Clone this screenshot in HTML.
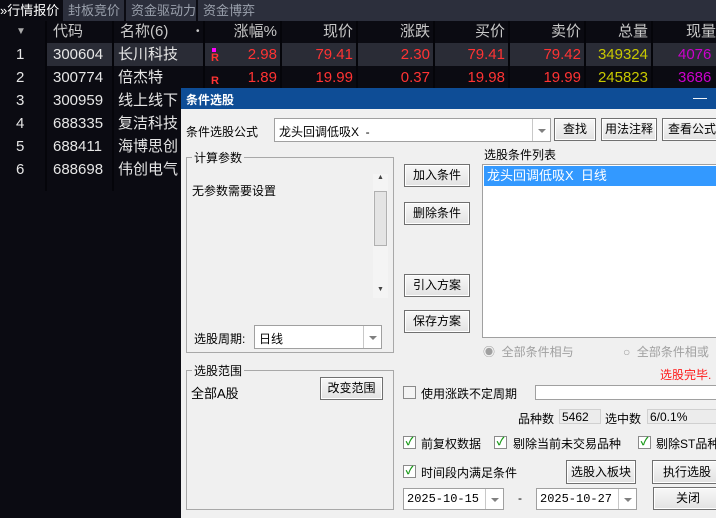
<!DOCTYPE html>
<html><head><meta charset="utf-8"><style>
*{margin:0;padding:0;box-sizing:border-box}
body{width:716px;height:517px;overflow:hidden;background:#0b0b12;font-family:"Liberation Sans","Noto Sans CJK SC",sans-serif;position:relative}
.a{position:absolute;white-space:nowrap}
.tab{position:absolute;top:0;height:21px;background:#2c2f3c;color:#9aa0ac;font-size:13px;line-height:21px;padding-left:5px}
.hd{color:#c8c8c8;font-size:15px}
.r{text-align:right}
.c{font-size:15px;line-height:23px}
.w{color:#e6e6e6}.red{color:#ff3333}.yel{color:#c8c800}.mag{color:#cc00cc}
.sep{position:absolute;top:21px;width:2px;height:170px;background:#05050a}
.dlg{position:absolute;left:181px;top:88px;width:540px;height:430px;background:#f0f0f0;font-size:12px;color:#000}
.d{position:absolute;white-space:nowrap;font-size:12px}
.btn{position:absolute;background:linear-gradient(#f8f8f8,#e2e2e2);border:1px solid #707070;box-shadow:inset 0 0 0 1px #fff;text-align:center;font-size:12px;line-height:20px}
.box{position:absolute;background:#fff;border:1px solid #a0a0a0}
.grp{position:absolute;border:1px solid #a8a8a8}
.gl{position:absolute;top:-9px;left:5px;background:#f0f0f0;padding:0 2px;font-size:12px}
.cb{position:absolute;width:13px;height:13px;border:1px solid #8a8a8a;background:#fff;color:#1a9a1a;font-size:11px;line-height:11px;text-align:center;font-weight:bold}
.dd{position:absolute;right:0;top:0;bottom:0;width:18px;border-left:1px solid #c8c8c8}
.dd:after{content:"";position:absolute;left:5px;top:45%;border:4px solid transparent;border-top:4px solid #808080}
</style></head><body>
<div class="tab" style="left:0;width:62px;background:#0b0b12;color:#fff;padding-left:0">»行情报价</div>
<div class="tab" style="left:63px;width:61px">封板竞价</div>
<div class="tab" style="left:126px;width:70px">资金驱动力</div>
<div class="tab" style="left:198px;width:64px">资金博弈</div>
<div class="a" style="left:262px;top:0;width:454px;height:21px;background:#2c2f3c"></div>

<div class="a" style="left:46px;top:43px;width:670px;height:23px;background:#2a2c36"></div>
<div class="sep" style="left:45px"></div><div class="sep" style="left:112px"></div><div class="sep" style="left:203px"></div><div class="sep" style="left:280px"></div><div class="sep" style="left:356px"></div><div class="sep" style="left:433px"></div><div class="sep" style="left:508px"></div><div class="sep" style="left:584px"></div><div class="sep" style="left:651px"></div>

<div class="a hd" style="left:16px;top:21px;line-height:22px;font-size:10px;color:#aaa">▼</div>
<div class="a hd" style="left:53px;top:21px;line-height:22px">代码</div>
<div class="a hd" style="left:120px;top:21px;line-height:22px">名称(6)</div>
<div class="a hd" style="left:196px;top:21px;line-height:22px;font-size:10px">•</div>
<div class="a hd r" style="left:205px;width:72px;top:21px;line-height:22px">涨幅%</div>
<div class="a hd r" style="left:282px;width:71px;top:21px;line-height:22px">现价</div>
<div class="a hd r" style="left:358px;width:72px;top:21px;line-height:22px">涨跌</div>
<div class="a hd r" style="left:435px;width:70px;top:21px;line-height:22px">买价</div>
<div class="a hd r" style="left:510px;width:71px;top:21px;line-height:22px">卖价</div>
<div class="a hd r" style="left:586px;width:62px;top:21px;line-height:22px">总量</div>
<div class="a hd r" style="left:653px;width:63px;top:21px;line-height:22px;overflow:hidden">现量</div>

<div class="a c w" style="left:16px;top:43px">1</div><div class="a c w" style="left:53px;top:43px">300604</div><div class="a c w" style="left:118px;top:43px">长川科技</div>
<div class="a c w" style="left:16px;top:66px">2</div><div class="a c w" style="left:53px;top:66px">300774</div><div class="a c w" style="left:118px;top:66px">倍杰特</div>
<div class="a c w" style="left:16px;top:89px">3</div><div class="a c w" style="left:53px;top:89px">300959</div><div class="a c w" style="left:118px;top:89px">线上线下</div>
<div class="a c w" style="left:16px;top:112px">4</div><div class="a c w" style="left:53px;top:112px">688335</div><div class="a c w" style="left:118px;top:112px">复洁科技</div>
<div class="a c w" style="left:16px;top:135px">5</div><div class="a c w" style="left:53px;top:135px">688411</div><div class="a c w" style="left:118px;top:135px">海博思创</div>
<div class="a c w" style="left:16px;top:158px">6</div><div class="a c w" style="left:53px;top:158px">688698</div><div class="a c w" style="left:118px;top:158px">伟创电气</div>

<div class="a" style="left:212px;top:48px;width:4px;height:4px;background:#f0f"></div>
<div class="a red" style="left:211px;top:52px;font-size:11px;font-weight:bold">R</div>
<div class="a red" style="left:211px;top:75px;font-size:11px;font-weight:bold">R</div>
<div class="a c red r" style="left:205px;width:72px;top:43px">2.98</div>
<div class="a c red r" style="left:282px;width:71px;top:43px">79.41</div>
<div class="a c red r" style="left:358px;width:72px;top:43px">2.30</div>
<div class="a c red r" style="left:435px;width:70px;top:43px">79.41</div>
<div class="a c red r" style="left:510px;width:71px;top:43px">79.42</div>
<div class="a c yel r" style="left:586px;width:62px;top:43px">349324</div>
<div class="a c mag" style="left:678px;top:43px">4076</div>
<div class="a c red r" style="left:205px;width:72px;top:66px">1.89</div>
<div class="a c red r" style="left:282px;width:71px;top:66px">19.99</div>
<div class="a c red r" style="left:358px;width:72px;top:66px">0.37</div>
<div class="a c red r" style="left:435px;width:70px;top:66px">19.98</div>
<div class="a c red r" style="left:510px;width:71px;top:66px">19.99</div>
<div class="a c yel r" style="left:586px;width:62px;top:66px">245823</div>
<div class="a c mag" style="left:678px;top:66px">3686</div>

<div class="dlg">
<div class="a" style="left:0;top:0;width:540px;height:21px;background:#0e4d96"></div>
<div class="d" style="left:5px;top:3px;color:#fff;font-weight:bold">条件选股</div>
<div class="d" style="left:512px;top:1px;color:#fff;font-size:14px">—</div>
<div class="d" style="left:5px;top:35px">条件选股公式</div>
<div class="box" style="left:93px;top:30px;width:277px;height:24px"><span class="d" style="left:4px;top:4px">龙头回调低吸X &nbsp;-</span><div class="dd"></div></div>
<div class="btn" style="left:373px;top:30px;width:42px;height:23px">查找</div>
<div class="btn" style="left:420px;top:30px;width:56px;height:23px">用法注释</div>
<div class="btn" style="left:481px;top:30px;width:60px;height:23px">查看公式</div>

<div class="grp" style="left:5px;top:69px;width:208px;height:196px"><span class="gl">计算参数</span></div>
<div class="d" style="left:11px;top:94px">无参数需要设置</div>
<div class="a" style="left:192px;top:86px;width:15px;height:124px;background:#f4f4f4"></div>
<div class="d" style="left:196px;top:86px;font-size:7px;color:#444">▲</div>
<div class="a" style="left:193px;top:103px;width:13px;height:55px;background:#e4e4e4;border:1px solid #b0b0b0"></div>
<div class="d" style="left:196px;top:198px;font-size:7px;color:#444">▼</div>
<div class="d" style="left:13px;top:242px">选股周期:</div>
<div class="box" style="left:73px;top:237px;width:128px;height:24px"><span class="d" style="left:4px;top:4px">日线</span><div class="dd"></div></div>

<div class="btn" style="left:223px;top:76px;width:66px;height:23px">加入条件</div>
<div class="btn" style="left:223px;top:114px;width:66px;height:23px">删除条件</div>
<div class="btn" style="left:223px;top:186px;width:66px;height:23px">引入方案</div>
<div class="btn" style="left:223px;top:222px;width:66px;height:23px">保存方案</div>

<div class="d" style="left:303px;top:58px">选股条件列表</div>
<div class="box" style="left:301px;top:76px;width:240px;height:174px"><div class="a" style="left:1px;top:1px;width:240px;height:20px;background:#3399ff;color:#fff;font-size:13px;line-height:20px;padding-left:3px">龙头回调低吸X &nbsp;日线</div></div>
<div class="d" style="left:302px;top:255px;color:#a0a0a0">◉ &nbsp;全部条件相与</div>
<div class="d" style="left:442px;top:255px;color:#a0a0a0">○ &nbsp;全部条件相或</div>
<div class="d" style="left:479px;top:278px;color:#ff1a1a">选股完毕.</div>

<div class="grp" style="left:5px;top:282px;width:208px;height:140px"><span class="gl">选股范围</span></div>
<div class="d" style="left:10px;top:295px;font-size:13px">全部A股</div>
<div class="btn" style="left:139px;top:289px;width:63px;height:23px">改变范围</div>

<div class="cb" style="left:222px;top:298px;background:#f4f4f4"></div>
<div class="d" style="left:240px;top:297px">使用涨跌不定周期</div>
<div class="box" style="left:354px;top:297px;width:190px;height:15px"></div>
<div class="d" style="left:337px;top:322px">品种数</div>
<div class="a" style="left:378px;top:321px;width:42px;height:15px;background:#ececec;border:1px solid #d0d0d0;font-size:12px;padding-left:2px">5462</div>
<div class="d" style="left:424px;top:322px">选中数</div>
<div class="a" style="left:466px;top:321px;width:80px;height:15px;background:#ececec;border:1px solid #d0d0d0;font-size:12px;padding-left:2px">6/0.1%</div>

<div class="cb" style="left:222px;top:348px">✓</div><div class="d" style="left:240px;top:347px">前复权数据</div>
<div class="cb" style="left:313px;top:348px">✓</div><div class="d" style="left:332px;top:347px">剔除当前未交易品种</div>
<div class="cb" style="left:457px;top:348px">✓</div><div class="d" style="left:475px;top:347px">剔除ST品种</div>
<div class="cb" style="left:222px;top:377px">✓</div><div class="d" style="left:240px;top:376px">时间段内满足条件</div>
<div class="btn" style="left:385px;top:372px;width:70px;height:24px;line-height:22px">选股入板块</div>
<div class="btn" style="left:471px;top:372px;width:70px;height:24px;line-height:22px">执行选股</div>
<div class="box" style="left:222px;top:400px;width:101px;height:22px"><span class="d" style="left:3px;top:3px;font-family:'Liberation Mono',monospace">2025-10-15</span><div class="dd"></div></div>
<div class="d" style="left:337px;top:403px">-</div>
<div class="box" style="left:355px;top:400px;width:101px;height:22px"><span class="d" style="left:3px;top:3px;font-family:'Liberation Mono',monospace">2025-10-27</span><div class="dd"></div></div>
<div class="btn" style="left:472px;top:399px;width:70px;height:23px">关闭</div>
</div>
</body></html>
